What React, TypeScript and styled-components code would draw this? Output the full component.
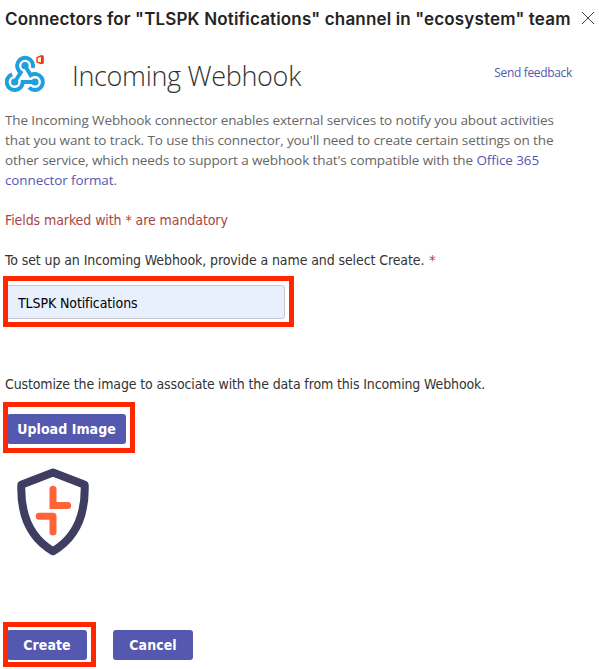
import React from 'react';
import styled, { createGlobalStyle } from 'styled-components';

const GlobalStyle = createGlobalStyle`
  * { box-sizing: border-box; }
  body { margin: 0; background: #fff; }
`;

const segoe = '"Open Sans", "Noto Sans", sans-serif';
const tahoma = '"DejaVu Sans Condensed", "DejaVu Sans", sans-serif';

const Dialog = styled.main`
  width: 602px;
  height: 669px;
  padding: 8px 5px 0;
  overflow: hidden;
  font-family: ${tahoma};
  font-size: 14px;
  line-height: 20px;
  color: #333;
  white-space: nowrap;
`;

const TitleBar = styled.header`
  display: flex;
  justify-content: space-between;
  height: 45px;
  padding-right: 2px;
`;

const Title = styled.h1`
  margin: 0;
  font: 600 17px/22px Inter, sans-serif;
  letter-spacing: 0.155px;
  color: #252424;
`;

const CloseButton = styled.button`
  width: 14px;
  height: 14px;
  margin-top: 3px;
  padding: 0;
  border: 0;
  background: none;
  svg { display: block; }
`;

const ConnectorHeader = styled.section`
  display: flex;
  height: 57px;
`;

const ConnectorName = styled.h2`
  margin: 3px 0 0 27px;
  font: 300 27px/40px ${segoe};
  letter-spacing: -0.32px;
  color: #333;
`;

const Link = styled.a`
  color: #5558af;
`;

const FeedbackLink = styled(Link)`
  margin: 10px 25px 0 auto;
  font: 400 12px/20px ${segoe};
  letter-spacing: -0.33px;
`;

const Description = styled.p`
  margin: 0 0 20px;
  font: 400 13.5px/20px ${segoe};
  letter-spacing: -0.107px;
  color: #666;
`;

const Note = styled.p`
  margin: 0 0 20px;
  letter-spacing: -0.08px;
  color: #a94442;
`;

const Label = styled.label`
  display: block;
  margin-bottom: 15px;
  letter-spacing: -0.1px;
`;

const Hint = styled.p`
  margin: 0 0 20px;
  letter-spacing: -0.137px;
`;

const Required = styled.span`
  margin-left: 1px;
  color: #a94442;
`;

const Highlighted = styled.div<{ $indent?: number; $gap?: number }>`
  position: relative;
  width: max-content;
  margin-left: ${(p) => p.$indent ?? 0}px;
  margin-bottom: ${(p) => p.$gap ?? 0}px;
`;

const Callout = styled.span<{ $inset: string }>`
  position: absolute;
  inset: ${(p) => p.$inset};
  border: 5px solid #ff2600;
  pointer-events: none;
`;

const NameInput = styled.input`
  display: block;
  width: 280px;
  height: 34px;
  padding: 1px 12px 0;
  border: 1px solid #c8c9cf;
  border-radius: 3px;
  outline: 0;
  background: #e8f0fe;
  font: 400 14px/20px ${tahoma};
  letter-spacing: -0.1px;
  color: #000;
`;

const Button = styled.button<{ $width: number }>`
  display: block;
  width: ${(p) => p.$width}px;
  height: 30px;
  padding: 0;
  border: 0;
  border-radius: 3px;
  background: #5558af;
  font: 700 14px/30px ${tahoma};
  letter-spacing: 0.06px;
  color: #fff;
`;

const Preview = styled.div`
  height: 186px;
  padding: 23px 0 0 11px;
  svg { display: block; }
`;

const Actions = styled.footer`
  display: flex;
  gap: 26px;
`;

const WebhookIcon = () => (
  <svg width="40" height="42" viewBox="5 53 40 42" fill="none">
    <g stroke="#1f9fdd" strokeWidth="3.9">
      <path d="M14.7 82 20.7 72.5A8 8 0 1 1 32.8 68" />
      <path d="M25 65.7 30.7 75.2A8 8 0 1 1 29 87.5" />
      <path d="M35 82H22.7A8 8 0 1 1 12.2 74.4" />
    </g>
    <g fill="#1f9fdd">
      <circle cx="25" cy="65.7" r="3.6" />
      <circle cx="14.7" cy="82" r="3.6" />
      <circle cx="35" cy="82" r="3.6" />
    </g>
    <path fill="#eb3c00" fillRule="evenodd" d="M36.3 57.2 41.2 55l2.6.8v7.6l-2.6.8-4.9-1.8ZM37.7 58v3.7l3.3.5v-5.4Z" />
  </svg>
);

const ShieldLogo = () => (
  <svg width="74" height="90" viewBox="16 467 74 90" fill="none">
    <path
      d="M53 472.5 21.3 484.8C20.4 517 32 539 53 551.2 74 539 85.6 517 84.7 484.8Z"
      stroke="#3f3e62"
      strokeWidth="8"
      strokeLinejoin="round"
    />
    <g stroke="#ff6337" strokeWidth="7" strokeLinecap="round">
      <path d="M53 489.2V505.5H67.7" />
      <path d="M39.2 516.2H53V532" strokeLinejoin="round" />
    </g>
  </svg>
);

export default function App() {
  return (
    <Dialog>
      <GlobalStyle />
      <TitleBar>
        <Title>Connectors for "TLSPK Notifications" channel in "ecosystem" team</Title>
        <CloseButton aria-label="Close">
          <svg width="14" height="14" viewBox="0 0 14 14">
            <path d="M1 1 13 13M13 1 1 13" stroke="#484644" strokeWidth="1" />
          </svg>
        </CloseButton>
      </TitleBar>
      <ConnectorHeader>
        <WebhookIcon />
        <ConnectorName>Incoming Webhook</ConnectorName>
        <FeedbackLink>Send feedback</FeedbackLink>
      </ConnectorHeader>
      <Description>
        The Incoming Webhook connector enables external services to notify you about activities
        <br />
        that you want to track. To use this connector, you'll need to create certain settings on the
        <br />
        other service, which needs to support a webhook that's compatible with the <Link>Office 365</Link>
        <br />
        <Link>connector format</Link>.
      </Description>
      <Note>Fields marked with * are mandatory</Note>
      <Label htmlFor="name">
        To set up an Incoming Webhook, provide a name and select Create. <Required>*</Required>
      </Label>
      <Highlighted $gap={55}>
        <NameInput id="name" defaultValue="TLSPK Notifications" />
        <Callout $inset="-9px -9px -8px -2px" />
      </Highlighted>
      <Hint>Customize the image to associate with the data from this Incoming Webhook.</Hint>
      <Highlighted $indent={2}>
        <Button $width={119}>Upload Image</Button>
        <Callout $inset="-12px -9px -9px -4px" />
      </Highlighted>
      <Preview>
        <ShieldLogo />
      </Preview>
      <Actions>
        <Highlighted $indent={2}>
          <Button $width={80}>Create</Button>
          <Callout $inset="-8px -9px -7px -4px" />
        </Highlighted>
        <Button $width={80}>Cancel</Button>
      </Actions>
    </Dialog>
  );
}
